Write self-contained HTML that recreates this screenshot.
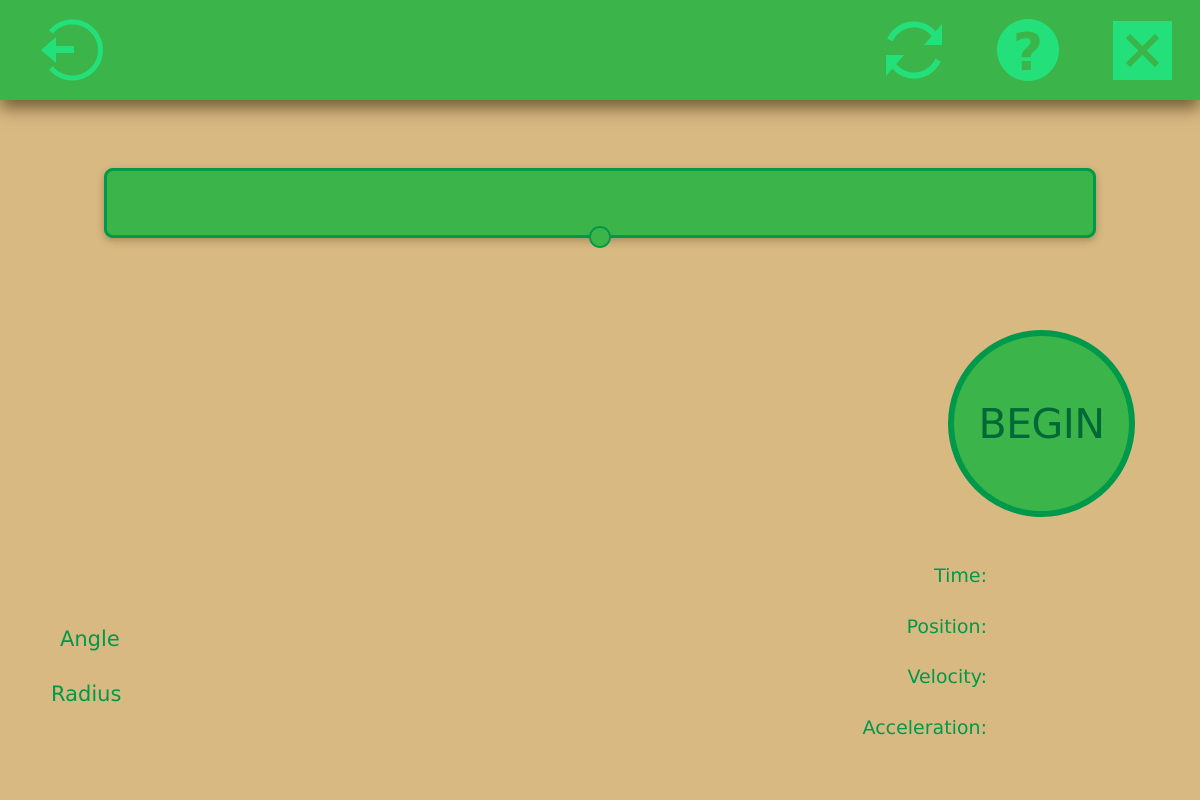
<!DOCTYPE html>
<html><head><style>
body{margin:0;width:1200px;height:800px;background:#d8b982;position:relative;overflow:hidden;font-family:"DejaVu Sans","Liberation Sans",sans-serif}
.hdr{position:absolute;left:0;top:0;width:1200px;height:100px;background:#3bb54a;box-shadow:0 8px 16px rgba(60,40,10,.65)}
.bar{position:absolute;left:104px;top:168px;width:986px;height:64px;background:#3bb54a;border:3px solid #00994a;border-radius:9px;box-shadow:0 3px 8px rgba(80,60,20,.35)}
.knob{position:absolute;left:589px;top:226px;width:18px;height:18px;border-radius:50%;background:#3bb54a;border:2.5px solid #00994a}
.btn{position:absolute;left:948px;top:330px;width:175px;height:175px;border-radius:50%;background:#3bb54a;border:6px solid #00984a;display:flex;align-items:center;justify-content:center;color:#006837;font-size:41px;letter-spacing:-0.5px}
.l{position:absolute;color:#00994a;font-size:19px}
.r{position:absolute;right:213px;color:#00994a;font-size:19px;text-align:right}
</style></head><body>
<div class="hdr">
<svg width="1200" height="100" style="position:absolute;left:0;top:0">
<path d="M51 32 A28 28 0 1 1 51 68" fill="none" stroke="#23e07a" stroke-width="5"/>
<rect x="52" y="46" width="22" height="7" fill="#23e07a"/>
<polygon points="41,50 56,37 56,63" fill="#23e07a"/>
<path d="M890 40 A26 26 0 0 1 934 34" fill="none" stroke="#23e07a" stroke-width="6"/>
<polygon points="942,24 942,45 924,45" fill="#23e07a"/>
<path d="M938 60 A26 26 0 0 1 894 66" fill="none" stroke="#23e07a" stroke-width="6"/>
<polygon points="886,76 886,55 904,55" fill="#23e07a"/>
<circle cx="1028" cy="50" r="31" fill="#23e07a"/>
<text x="1028" y="70" text-anchor="middle" font-family="DejaVu Sans" font-weight="bold" font-size="52" fill="#3bb54a">?</text>
<rect x="1113" y="21" width="59" height="59" fill="#23e07a"/>
<path d="M1128 36 L1157 65 M1157 36 L1128 65" stroke="#3bb54a" stroke-width="6"/>
</svg>
</div>
<div class="bar"></div>
<div class="knob"></div>
<div class="btn">BEGIN</div>
<div class="r" style="top:565px">Time:</div>
<div class="r" style="top:616px">Position:</div>
<div class="r" style="top:666px">Velocity:</div>
<div class="r" style="top:717px">Acceleration:</div>
<div class="l" style="left:60px;top:627px;font-size:21px">Angle</div>
<div class="l" style="left:51px;top:682px;font-size:21px">Radius</div>
</body></html>
